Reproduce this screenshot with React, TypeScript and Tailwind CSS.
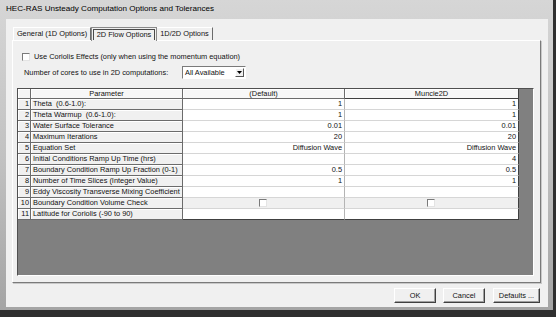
import React from "react"

type Row = {
  n: number
  label: string
  def?: string
  mun?: string
  check?: boolean
}

const ROWS: Row[] = [
  { n: 1, label: "Theta  (0.6-1.0):", def: "1", mun: "1" },
  { n: 2, label: "Theta Warmup  (0.6-1.0):", def: "1", mun: "1" },
  { n: 3, label: "Water Surface Tolerance", def: "0.01", mun: "0.01" },
  { n: 4, label: "Maximum Iterations", def: "20", mun: "20" },
  { n: 5, label: "Equation Set", def: "Diffusion Wave", mun: "Diffusion Wave" },
  { n: 6, label: "Initial Conditions Ramp Up Time (hrs)", def: "", mun: "4" },
  { n: 7, label: "Boundary Condition Ramp Up Fraction (0-1)", def: "0.5", mun: "0.5" },
  { n: 8, label: "Number of Time Slices (Integer Value)", def: "1", mun: "1" },
  { n: 9, label: "Eddy Viscosity Transverse Mixing Coefficient", def: "", mun: "" },
  { n: 10, label: "Boundary Condition Volume Check", check: true },
  { n: 11, label: "Latitude for Coriolis (-90 to 90)", def: "", mun: "" },
]

function Checkbox() {
  return (
    <div className="h-[8px] w-[8px] shrink-0 border border-t-[#7a7a7a] border-l-[#7a7a7a] border-r-[#e4e4e4] border-b-[#e4e4e4] bg-white" />
  )
}

function Button({ label, width }: { label: string; width: string }) {
  return (
    <div
      className={`${width} flex h-[15px] items-center justify-center border border-t-white border-l-white border-r-[#404040] border-b-[#404040] bg-[#f0f0f0] shadow-[inset_-1px_-1px_0_#a0a0a0]`}
    >
      {label}
    </div>
  )
}

function GridRow({ row, last }: { row: Row; last: boolean }) {
  const shade = row.check ? "bg-[#f0f0f0]" : "bg-white"
  const bottom = last ? "border-b-[#404040]" : "border-b-[#d6d6d6]"
  return (
    <>
      <div className="flex h-[11px] items-center justify-end border-b border-r border-[#6b6b6b] bg-[#f0f0f0] pr-[1px] shadow-[inset_1px_1px_0_#ffffff]">
        {row.n}
      </div>
      <div className="flex h-[11px] items-center whitespace-pre border-b border-r border-[#6b6b6b] bg-[#f0f0f0] pl-[2px] shadow-[inset_1px_1px_0_#ffffff]">
        {row.label}
      </div>
      <div
        className={`flex h-[11px] items-center border-b border-r border-r-[#b4b4b4] ${bottom} ${shade} pr-[2px] ${row.check ? "justify-center" : "justify-end"}`}
      >
        {row.check ? <Checkbox /> : row.def}
      </div>
      <div
        className={`flex h-[11px] items-center border-b border-r border-r-[#404040] ${bottom} ${shade} pr-[2px] ${row.check ? "justify-center" : "justify-end"}`}
      >
        {row.check ? <Checkbox /> : row.mun}
      </div>
    </>
  )
}

export default function App() {
  return (
    <div className="flex h-[317px] w-[556px] bg-[#2f2f2f] pr-[3px] pb-[7px] font-['Liberation_Sans',Arial,sans-serif] text-[7.4px] leading-none text-[#111]">
      <div className="flex flex-1 flex-col bg-gradient-to-b from-[#d6d6d6] via-[#c2c2c2] to-[#a4a4a4] pr-[5px] pb-[3px] pl-[6px]">
        {/* title bar */}
        <div className="flex h-[19px] items-center text-[8.1px] text-black">
          HEC-RAS Unsteady Computation Options and Tolerances
        </div>

        {/* client area */}
        <div className="flex flex-1 flex-col bg-[#f0f0f0] pt-[8px] pr-[7px] pb-[4px] pl-[6px]">
          {/* tabs */}
          <div className="flex h-[13px] items-end pl-[1px]">
            <div className="flex h-[13px] w-[78px] items-center justify-center border-t border-l border-r border-t-white border-l-white border-r-[#6b6b6b]">
              General (1D Options)
            </div>
            <div className="z-10 -mb-[1px] flex h-[14px] w-[66px] items-center justify-center border border-b-0 border-[#8a8a8a] bg-[#f0f0f0] p-[1px]">
              <div className="flex h-full w-full items-center justify-center border border-b-0 border-[#4a4a4a]">
                2D Flow Options
              </div>
            </div>
            <div className="flex h-[13px] w-[56px] items-center justify-center border-t border-r border-t-white border-r-[#6b6b6b]">
              1D/2D Options
            </div>
          </div>

          {/* tab panel */}
          <div className="flex h-[243px] flex-col border border-t-white border-l-white border-r-[#7a7a7a] border-b-[#7a7a7a] shadow-[1px_1px_0_#c8c8c8]">
            <div className="mt-[11px] flex h-[10px] items-center gap-[4px] pl-[9px]">
              <Checkbox />
              <span>Use Coriolis Effects (only when using the momentum equation)</span>
            </div>

            <div className="mt-[4px] flex h-[13px] items-center pl-[11px]">
              <span className="w-[158px]">Number of cores to use in 2D computations:</span>
              <div className="flex h-[13px] w-[64px] items-stretch border border-t-[#7a7a7a] border-l-[#7a7a7a] border-r-white border-b-white bg-white">
                <div className="flex flex-1 items-center pl-[2px]">All Available</div>
                <div className="m-[1px] flex w-[9px] items-center justify-center border border-t-white border-l-white border-r-[#555] border-b-[#555] bg-[#f0f0f0]">
                  <svg width="5" height="3" viewBox="0 0 5 3">
                    <path d="M0 0H5L2.5 3Z" fill="#000" />
                  </svg>
                </div>
              </div>
            </div>

            {/* grid */}
            <div className="mt-[9px] ml-[4px] h-[188px] w-[517px] border border-t-[#505050] border-l-[#505050] border-r-white border-b-white bg-[#808080]">
              <div className="grid grid-cols-[13px_152px_162px_174px]">
                <div className="h-[10px] border-b border-r border-[#6b6b6b] bg-[#f4f4f4] shadow-[inset_1px_1px_0_#ffffff]" />
                <div className="flex h-[10px] items-center justify-center border-b border-r border-[#6b6b6b] bg-[#f7f7f7] shadow-[inset_1px_1px_0_#ffffff]">
                  Parameter
                </div>
                <div className="flex h-[10px] items-center justify-center border-b border-r border-[#6b6b6b] bg-[#f7f7f7] shadow-[inset_1px_1px_0_#ffffff]">
                  (Default)
                </div>
                <div className="flex h-[10px] items-center justify-center border-b border-r border-[#404040] bg-[#f7f7f7] shadow-[inset_1px_1px_0_#ffffff]">
                  Muncie2D
                </div>
                {ROWS.map((row, i) => (
                  <GridRow key={row.n} row={row} last={i === ROWS.length - 1} />
                ))}
              </div>
            </div>
          </div>

          {/* buttons */}
          <div className="mt-[5px] flex justify-end pr-[1px]">
            <Button label="OK" width="w-[42px]" />
            <div className="w-[7px]" />
            <Button label="Cancel" width="w-[42px]" />
            <div className="w-[8px]" />
            <Button label="Defaults ..." width="w-[47px]" />
          </div>
        </div>
      </div>
    </div>
  )
}
